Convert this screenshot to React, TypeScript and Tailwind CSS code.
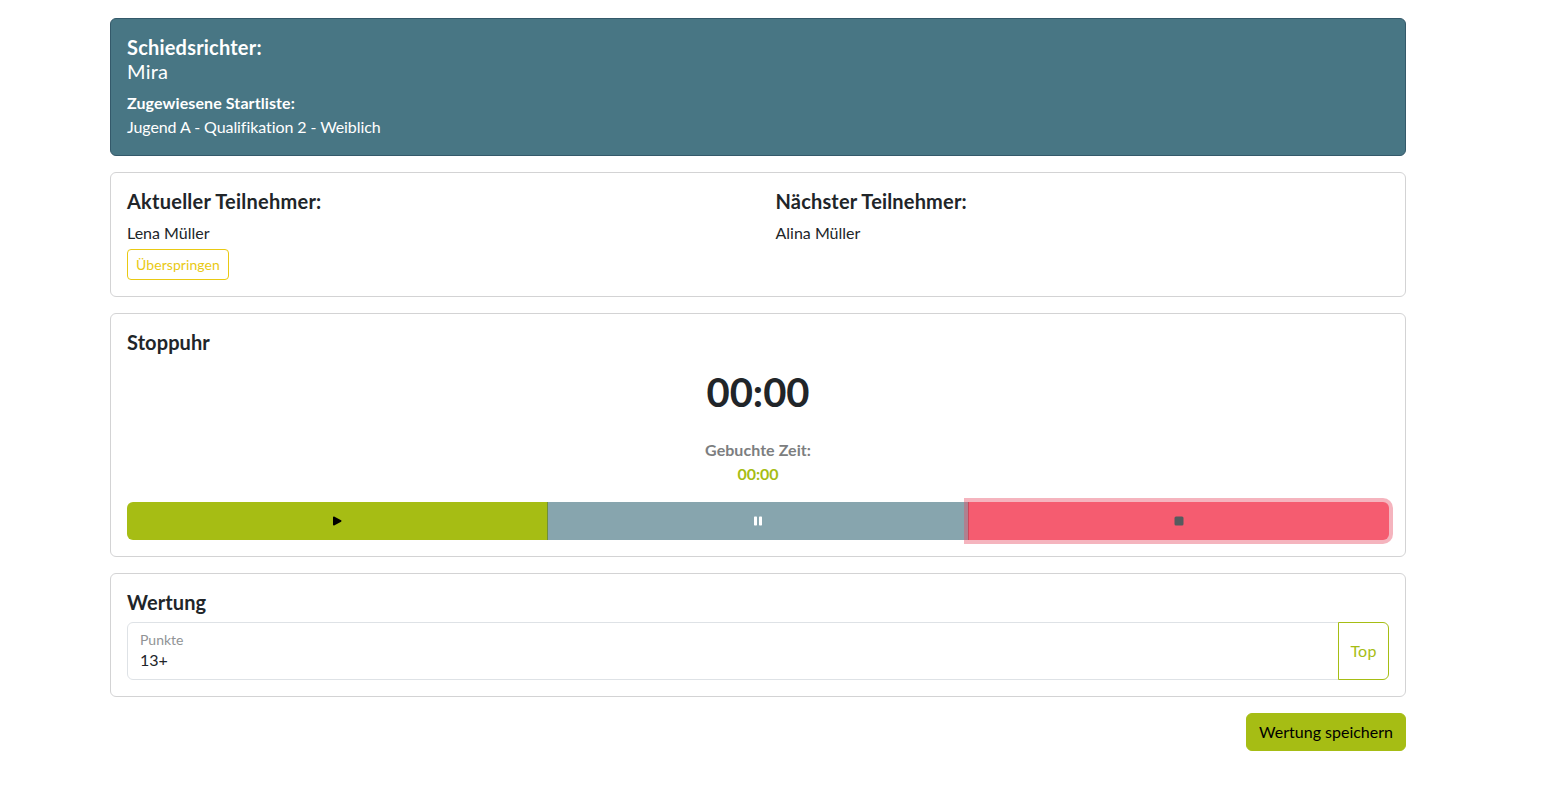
import React from "react";

function PlayIcon() {
  return (
    <svg viewBox="0 0 10 10" className="w-[10px] h-[10px]" fill="#000">
      <path d="M1 1.2C1 .6 1.6.2 2.1.5l7 3.8c.5.3.5 1.1 0 1.4l-7 3.8c-.5.3-1.1-.1-1.1-.7z" />
    </svg>
  );
}

function PauseIcon() {
  return (
    <svg viewBox="0 0 10 10" className="w-[10px] h-[10px]" fill="#fff">
      <rect x="1" y="0.5" width="3" height="9" rx="0.7" />
      <rect x="6" y="0.5" width="3" height="9" rx="0.7" />
    </svg>
  );
}

function StopIcon() {
  return (
    <svg viewBox="0 0 10 10" className="w-[10px] h-[10px]" fill="#555b5e">
      <rect x="0.5" y="0.5" width="9" height="9" rx="1.5" />
    </svg>
  );
}

export default function App() {
  return (
    <div className="min-h-screen bg-white font-['Lato',sans-serif] text-[16px] leading-6 text-[#212529] pr-[25px] pt-[18px]">
      <div className="max-w-[1296px] mx-auto space-y-4">
        <div className="bg-[#487684] border border-[#34596a] rounded-md p-4 text-white">
          <h5 className="text-[20px] leading-6 font-bold tracking-[0.2px]">Schiedsrichter:</h5>
          <h5 className="text-[20px] leading-6 font-normal tracking-[0.25px] mb-2">Mira</h5>
          <p className="font-bold tracking-[0.1px]">Zugewiesene Startliste:</p>
          <p className="tracking-[-0.08px]">Jugend A - Qualifikation 2 - Weiblich</p>
        </div>

        <div className="bg-white border border-[#d3d3d4] rounded-md p-4 grid grid-cols-[648.5px_1fr]">
          <div>
            <h5 className="text-[20px] leading-6 font-bold tracking-[0.24px] mb-2">Aktueller Teilnehmer:</h5>
            <p>Lena Müller</p>
            <button className="mt-1 block h-[31px] px-2 border border-[#e9c913] rounded text-[14px] leading-[21px] tracking-[0.08px] text-[#e9c913]">
              Überspringen
            </button>
          </div>
          <div>
            <h5 className="text-[20px] leading-6 font-bold tracking-[0.17px] mb-2">Nächster Teilnehmer:</h5>
            <p>Alina Müller</p>
          </div>
        </div>

        <div className="bg-white border border-[#d3d3d4] rounded-md p-4">
          <h5 className="text-[20px] leading-6 font-bold tracking-[0.1px] mb-2">Stoppuhr</h5>
          <div className="text-center">
            <div className="text-[40px] leading-[48px] font-bold mt-[14px] mb-[22px]">00:00</div>
            <p className="font-bold tracking-[0.05px] text-[#7c7e80]">Gebuchte Zeit:</p>
            <p className="font-bold text-[#a6bd14]">00:00</p>
          </div>
          <div className="grid grid-cols-3 mt-4 h-[38px]">
            <button className="flex items-center justify-center bg-[#a6bd14] rounded-l-md border-r border-[#6f8f3a]">
              <PlayIcon />
            </button>
            <button className="flex items-center justify-center bg-[#87a5ae]">
              <PauseIcon />
            </button>
            <button className="relative z-10 flex items-center justify-center bg-[#f55c70] rounded-r-md border-l border-[#c9485c] shadow-[0_0_0_4px_rgba(232,76,100,0.42)]">
              <StopIcon />
            </button>
          </div>
        </div>

        <div className="bg-white border border-[#d3d3d4] rounded-md p-4">
          <h5 className="text-[20px] leading-6 font-bold tracking-[0.1px] mb-2">Wertung</h5>
          <div className="flex h-[58px]">
            <div className="flex-1 border border-[#dee2e6] rounded-l-md pl-3 pt-[8px]">
              <label className="block text-[14px] leading-[17px] text-[#909395]">Punkte</label>
              <input readOnly value="13+" className="block w-full h-[23px] text-[16px] leading-6 text-[#212529] outline-none" />
            </div>
            <button className="w-[51px] -ml-px border border-[#a6bd14] rounded-r-md tracking-[0.2px] text-[#a6bd14]">Top</button>
          </div>
        </div>

        <div className="flex justify-end">
          <button className="h-[38px] px-3 bg-[#a6bd14] border border-[#a6bd14] rounded-md text-black">
            Wertung speichern
          </button>
        </div>
      </div>
    </div>
  );
}
